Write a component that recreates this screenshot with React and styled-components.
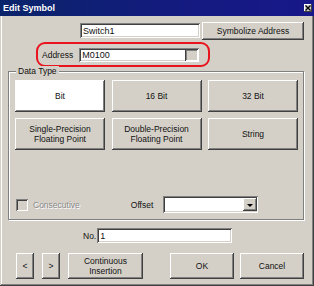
import React from 'react'
import styled, { createGlobalStyle, css } from 'styled-components'

const GlobalStyle = createGlobalStyle`
  *{
    margin:0;
    padding:0;
    box-sizing:border-box;
  }
  body{
    background:#D4D0C8;
    font-family: "Liberation Sans", Arial, sans-serif;
    font-size: 8.5px;
    color:#111;
  }`

const Window = styled.div`
  width: 314px;
  height: 286px;
  background: #D4D0C8;
  display: flex;
  flex-direction: column;
  box-shadow: inset -1px -1px #404040, inset 1px 1px #D4D0C8, inset -2px -2px #808080, inset 2px 2px #fff;
  overflow: hidden;`

const TitleBar = styled.div`
  height: 16px;
  background: linear-gradient(to right, #0A246A, #141a80 60%, #18188a);
  color: #fff;
  font-weight: bold;
  font-size: 9px;
  display: flex;
  align-items: center;
  justify-content: space-between;
  padding: 0 2px 0 3px;`

const CloseBox = styled.div`
  width: 8px;
  height: 8px;
  background: #D4D0C8;
  box-shadow: inset -1px -1px #404040, inset 1px 1px #fff;
  display: flex;
  align-items: center;
  justify-content: center;`

const Row = styled.div`
  display: flex;
  align-items: ${p => p.align || 'center'};
  margin-top: ${p => p.top || 0}px;
  padding-left: ${p => p.left || 0}px;
  gap: ${p => p.gap || 0}px;`

const sunken = css`
  background: #fff;
  box-shadow: inset 1px 1px #808080, inset -1px -1px #fff, inset 2px 2px #404040, inset -2px -2px #D4D0C8;`

const TextField = styled.div`
  ${sunken}
  width: ${p => p.w}px;
  height: ${p => p.h || 15}px;
  display: flex;
  align-items: center;
  justify-content: space-between;
  padding: 0 1px 0 3px;
  font-size: 9px;`

const Button = styled.div`
  width: ${p => p.w}px;
  height: ${p => p.h}px;
  background: ${p => (p.selected ? '#fff' : '#D4D0C8')};
  box-shadow: inset -1px -1px #404040, inset 1px 1px #fff, inset -2px -2px #808080;
  display: flex;
  align-items: center;
  justify-content: center;
  text-align: center;
  line-height: 10px;
  flex-shrink: 0;`

const MiniButton = styled.div`
  width: 13px;
  height: 12px;
  background: #D4D0C8;
  box-shadow: inset 1px 1px #404040, inset -1px -1px #fff, inset 2px 2px #808080;`

const Highlight = styled.div`
  margin: 2px 0 0 36px;
  width: 174px;
  height: 25px;
  border: 2px solid #E8141E;
  border-radius: 9px;
  display: flex;
  align-items: center;
  padding-left: 4px;
  gap: 6px;`

const Label = styled.span`
  color: ${p => (p.disabled ? '#8a8a8a' : '#111')};
  text-shadow: ${p => (p.disabled ? '1px 1px #fff' : 'none')};`

const Group = styled.div`
  position: relative;
  margin: 4px 0 0 8px;
  width: 296px;
  height: 149px;
  border: 1px solid #808080;
  box-shadow: 1px 1px 0 #fff, inset 1px 1px 0 #fff;
  padding: 8px 0 0 6px;`

const Legend = styled.span`
  position: absolute;
  top: -6px;
  left: 7px;
  background: #D4D0C8;
  padding: 0 2px;`

const TypeGrid = styled.div`
  display: grid;
  grid-template-columns: 90px 90px 90px;
  grid-auto-rows: 32px;
  column-gap: 6.5px;
  row-gap: 6px;`

const Check = styled.div`
  width: 12px;
  height: 12px;
  background: #D4D0C8;
  box-shadow: inset 1px 1px #808080, inset -1px -1px #fff, inset 2px 2px #404040, inset -2px -2px #D4D0C8;`

const DropArrow = styled.div`
  width: 14px;
  height: 13px;
  background: #D4D0C8;
  box-shadow: inset -1px -1px #404040, inset 1px 1px #fff, inset -2px -2px #808080;
  display: flex;
  align-items: center;
  justify-content: center;
  &::after{
    content: '';
    border-left: 3px solid transparent;
    border-right: 3px solid transparent;
    border-top: 3px solid #000;
    margin-top: 1px;
  }`

const Footer = styled.div`
  display: flex;
  justify-content: space-between;
  margin-top: 10px;
  padding: 0 10px 0 16px;`

const ButtonGroup = styled.div`
  display: flex;
  gap: ${p => p.gap}px;`

const types = [
  ['Bit', true],
  ['16 Bit'],
  ['32 Bit'],
  ['Single-Precision\nFloating Point'],
  ['Double-Precision\nFloating Point'],
  ['String'],
]

const Lines = ({ text }) =>
  text.split('\n').map((t, i) => <div key={i}>{t}</div>)

export default function App() {
  return (
    <Window>
      <GlobalStyle />
      <TitleBar>
        <span>Edit Symbol</span>
        <CloseBox>
          <svg width="6" height="6" viewBox="0 0 6 6">
            <path d="M0.5 0.5L5.5 5.5M5.5 0.5L0.5 5.5" stroke="#000" strokeWidth="1.3" />
          </svg>
        </CloseBox>
      </TitleBar>

      <Row top={6} left={80} gap={2} align="flex-start">
        <TextField w={120} h={15} style={{ marginTop: 1 }}>Switch1</TextField>
        <Button w={102} h={18}>Symbolize Address</Button>
      </Row>

      <Highlight>
        <Label>Address</Label>
        <TextField w={120} h={14}>
          <span>M0100</span>
          <MiniButton />
        </TextField>
      </Highlight>

      <Group>
        <Legend>Data Type</Legend>
        <TypeGrid>
          {types.map(([t, sel]) => (
            <Button key={t} selected={sel}>
              <div><Lines text={t} /></div>
            </Button>
          ))}
        </TypeGrid>
        <Row top={46}>
          <Row left={1} gap={5}>
            <Check />
            <Label disabled>Consecutive</Label>
          </Row>
          <Row left={51} gap={10}>
            <Label>Offset</Label>
            <TextField w={95} h={17}>
              <span />
              <DropArrow />
            </TextField>
          </Row>
        </Row>
      </Group>

      <Row top={8} left={83} gap={1}>
        <Label>No.</Label>
        <TextField w={135} h={15}>1</TextField>
      </Row>

      <Footer>
        <ButtonGroup gap={8}>
          <Button w={18} h={26}>&lt;</Button>
          <Button w={18} h={26}>&gt;</Button>
          <Button w={75} h={26}><div>Continuous<br />Insertion</div></Button>
        </ButtonGroup>
        <ButtonGroup gap={6}>
          <Button w={64} h={26}>OK</Button>
          <Button w={64} h={26}>Cancel</Button>
        </ButtonGroup>
      </Footer>
    </Window>
  )
}
